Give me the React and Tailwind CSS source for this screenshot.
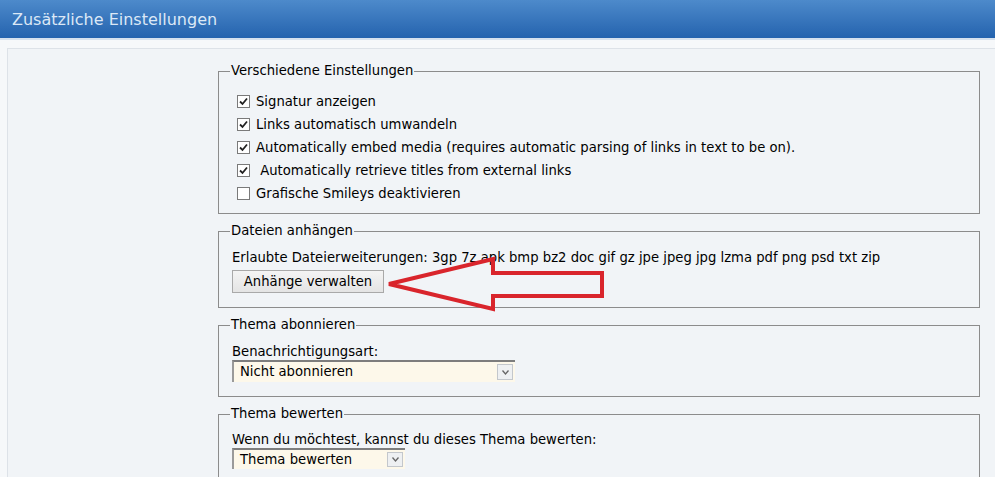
import React from 'react';

const font = { fontFamily: '"DejaVu Sans", Verdana, sans-serif' };

function Check({ checked }) {
  return (
    <span className="w-[13px] h-[13px] border border-[#7a7a7a] bg-white flex items-center justify-center shrink-0">
      {checked && (
        <svg width="9" height="9" viewBox="0 0 9 9">
          <path d="M1 4.5 L3.5 7 L8 1.5" fill="none" stroke="#222" strokeWidth="1.8" />
        </svg>
      )}
    </span>
  );
}

function Select({ label, width, height }) {
  return (
    <div className={`${width} ${height} flex items-stretch bg-[#fdf8ea] border-t-2 border-l-2 border-t-[#7d7d7d] border-l-[#9a9a9a]`}>
      <span className="flex-1 flex items-center pl-[6px] text-[13.2px] text-black">{label}</span>
      <span className="w-[16px] my-[2px] mr-[2px] border border-[#c3c7cc] bg-[#eef0f2] flex items-center justify-center">
        <svg width="7" height="5" viewBox="0 0 7 5">
          <path d="M0.5 0.5 L3.5 4 L6.5 0.5" fill="none" stroke="#666" strokeWidth="1.3" />
        </svg>
      </span>
    </div>
  );
}

function Box({ title, children, className = '' }) {
  return (
    <fieldset className={`border border-[#8c8c8c] pl-[11px] pr-[13px] ${className}`}>
      <legend className="px-[1px] text-[13.2px] leading-[16px] text-black">{title}</legend>
      <div className="ml-[2px]">{children}</div>
    </fieldset>
  );
}

export default function App() {
  const options = [
    { label: 'Signatur anzeigen', checked: true },
    { label: 'Links automatisch umwandeln', checked: true },
    { label: 'Automatically embed media (requires automatic parsing of links in text to be on).', checked: true },
    { label: '\u00a0Automatically retrieve titles from external links', checked: true },
    { label: 'Grafische Smileys deaktivieren', checked: false },
  ];

  return (
    <div className="w-[995px] h-[477px] overflow-hidden bg-[#f6f8fa] relative" style={font}>
      {/* Header */}
      <div className="h-[38px] bg-gradient-to-b from-[#4d8acb] to-[#2463ae] flex items-center px-[12px]">
        <span className="text-[16px] text-[#dce8f6] pt-[1px]">Zusätzliche Einstellungen</span>
      </div>
      <div className="h-[2px] bg-[#d5e1ee]" />

      {/* Panel */}
      <div className="mt-[8px] ml-[7px] border-t border-l border-[#dde2e8] bg-[#f1f4f7] flex h-[440px]">
        <div className="w-[210px] shrink-0" />
        <div className="w-[762px] pt-[14px] flex flex-col gap-[9px]">
          <Box title="Verschiedene Einstellungen" className="pt-[11px] pb-[8px]">
            <div className="flex flex-col">
              {options.map((o) => (
                <div key={o.label} className="h-[23px] flex items-center gap-[6px] pl-[5px] text-[13.2px] text-black">
                  <Check checked={o.checked} />
                  <span className="whitespace-pre">{o.label}</span>
                </div>
              ))}
            </div>
          </Box>

          <Box title="Dateien anhängen" className="pt-[10px] pb-[14px]">
            <div className="text-[13.2px] leading-[18px] text-black">
              Erlaubte Dateierweiterungen: 3gp 7z apk bmp bz2 doc gif gz jpe jpeg jpg lzma pdf png psd txt zip
            </div>
            <button className="mt-[3px] h-[23px] w-[152px] border border-[#a9a9a9] bg-gradient-to-b from-[#f4f4f4] to-[#e4e4e4] text-[13.2px] text-black">
              Anhänge verwalten
            </button>
          </Box>

          <Box title="Thema abonnieren" className="pt-[11px] pb-[14px]">
            <div className="text-[13.2px] leading-[16px] text-black">Benachrichtigungsart:</div>
            <Select label="Nicht abonnieren" width="w-[283px]" height="h-[22px]" />
          </Box>

          <Box title="Thema bewerten" className="pt-[10px] pb-[14px]">
            <div className="text-[13.2px] leading-[16px] text-black">Wenn du möchtest, kannst du dieses Thema bewerten:</div>
            <Select label="Thema bewerten" width="w-[173px]" height="h-[21px]" />
          </Box>
        </div>
      </div>

      {/* Red arrow annotation */}
      <svg className="absolute left-0 top-0 pointer-events-none" width="995" height="477" viewBox="0 0 995 477">
        <polygon
          points="389,284 493,259 493,273 602,273 602,296 493,296 493,309"
          fill="none"
          stroke="#d9252c"
          strokeWidth="4"
          strokeLinejoin="miter"
        />
      </svg>
    </div>
  );
}
